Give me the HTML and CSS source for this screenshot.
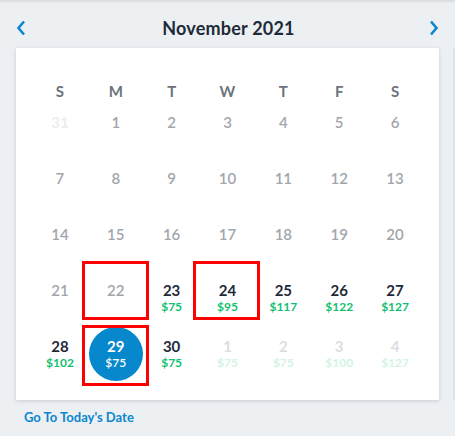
FILE: index.html
```html
<!DOCTYPE html>
<html>
<head>
<meta charset="utf-8">
<link rel="stylesheet" href="styles.css">
</head>
<body>
<div class="page">
  <section class="month">
    <header class="month-head">
      <button class="nav" aria-label="Previous month">
        <svg width="10" height="16" viewBox="0 0 10 16"><path d="M8 1.5 L2.5 8 L8 14.5" fill="none" stroke="#0a87cd" stroke-width="2.6"/></svg>
      </button>
      <h1 class="title">November 2021</h1>
      <button class="nav" aria-label="Next month">
        <svg width="10" height="16" viewBox="0 0 10 16"><path d="M2 1.5 L7.5 8 L2 14.5" fill="none" stroke="#0a87cd" stroke-width="2.6"/></svg>
      </button>
    </header>
    <div class="card">
      <div class="grid">
        <div class="wd">S</div><div class="wd">M</div><div class="wd">T</div><div class="wd">W</div><div class="wd">T</div><div class="wd">F</div><div class="wd">S</div>

        <div class="day faint"><span class="num">31</span><span class="price"></span></div>
        <div class="day past"><span class="num">1</span><span class="price"></span></div>
        <div class="day past"><span class="num">2</span><span class="price"></span></div>
        <div class="day past"><span class="num">3</span><span class="price"></span></div>
        <div class="day past"><span class="num">4</span><span class="price"></span></div>
        <div class="day past"><span class="num">5</span><span class="price"></span></div>
        <div class="day past"><span class="num">6</span><span class="price"></span></div>

        <div class="day past"><span class="num">7</span><span class="price"></span></div>
        <div class="day past"><span class="num">8</span><span class="price"></span></div>
        <div class="day past"><span class="num">9</span><span class="price"></span></div>
        <div class="day past"><span class="num">10</span><span class="price"></span></div>
        <div class="day past"><span class="num">11</span><span class="price"></span></div>
        <div class="day past"><span class="num">12</span><span class="price"></span></div>
        <div class="day past"><span class="num">13</span><span class="price"></span></div>

        <div class="day past"><span class="num">14</span><span class="price"></span></div>
        <div class="day past"><span class="num">15</span><span class="price"></span></div>
        <div class="day past"><span class="num">16</span><span class="price"></span></div>
        <div class="day past"><span class="num">17</span><span class="price"></span></div>
        <div class="day past"><span class="num">18</span><span class="price"></span></div>
        <div class="day past"><span class="num">19</span><span class="price"></span></div>
        <div class="day past"><span class="num">20</span><span class="price"></span></div>

        <div class="day past"><span class="num">21</span><span class="price"></span></div>
        <div class="day past marked"><span class="num">22</span><span class="price"></span></div>
        <div class="day open"><span class="num">23</span><span class="price">$75</span></div>
        <div class="day open marked"><span class="num">24</span><span class="price">$95</span></div>
        <div class="day open"><span class="num">25</span><span class="price">$117</span></div>
        <div class="day open"><span class="num">26</span><span class="price">$122</span></div>
        <div class="day open"><span class="num">27</span><span class="price">$127</span></div>

        <div class="day open"><span class="num">28</span><span class="price">$102</span></div>
        <div class="day selected marked tall"><span class="num">29</span><span class="price">$75</span></div>
        <div class="day open"><span class="num">30</span><span class="price">$75</span></div>
        <div class="day next"><span class="num">1</span><span class="price">$75</span></div>
        <div class="day next"><span class="num">2</span><span class="price">$75</span></div>
        <div class="day next"><span class="num">3</span><span class="price">$100</span></div>
        <div class="day next"><span class="num">4</span><span class="price">$127</span></div>
      </div>
    </div>
    <a class="today" href="#">Go To Today's Date</a>
  </section>
  <div class="peek"></div>
</div>
</body>
</html>
```

FILE: styles.css
```css
*, *::before, *::after { box-sizing: border-box; }
html, body { margin: 0; padding: 0; }
body {
  width: 455px;
  height: 436px;
  overflow: hidden;
  background: #edf0f3;
  font-family: "Lato", "Open Sans", sans-serif;
  color: #1e2a37;
}
.page {
  display: flex;
  height: 436px;
  box-shadow: inset 0 3px 3px -2px rgba(0,0,0,0.12);
}
.month {
  flex: 0 0 453px;
  display: flex;
  flex-direction: column;
}
.month-head {
  height: 48px;
  display: flex;
  align-items: center;
  justify-content: space-between;
  padding: 8px 14px 0 16px;
}
.nav {
  border: 0;
  background: none;
  padding: 0;
  width: 10px;
  height: 16px;
  display: flex;
  cursor: pointer;
}
.title {
  margin: 0 0 0 2px;
  font-size: 18px;
  font-weight: 700;
  color: #1e2a37;
  letter-spacing: 0.2px;
}
.card {
  margin: 0 14px 0 16px;
  background: #fff;
  box-shadow: 0 1px 4px rgba(30,40,60,0.18);
  padding: 32px 16px 18px 16px;
  height: 352px;
}
.peek {
  flex: 0 0 2px;
  margin: 48px 0 36px 0;
  background: #dfe2e6;
}
.grid {
  display: grid;
  grid-template-columns: repeat(7, 1fr);
  grid-template-rows: 22px repeat(5, 56px);
}
.wd {
  display: flex;
  align-items: center;
  justify-content: center;
  font-size: 15px;
  font-weight: 700;
  color: #6c737c;
}
.day {
  position: relative;
  display: flex;
  flex-direction: column;
  align-items: center;
  justify-content: center;
  padding-bottom: 1px;
}
.num {
  height: 18px;
  line-height: 18px;
  font-size: 15px;
  font-weight: 700;
}
.price {
  height: 15px;
  line-height: 15px;
  font-size: 12px;
  font-weight: 700;
  color: #13c06f;
}
.faint .num { color: #eceef0; }
.past .num { color: #a2a6ab; font-weight: 600; }
.open .num { color: #1e2a37; }
.next .num { color: #dcdee1; }
.next .price { color: #d3f4e3; }
.selected::before {
  content: "";
  position: absolute;
  left: 50%;
  top: 50%;
  width: 54px;
  height: 54px;
  margin: -27px 0 0 -27px;
  border-radius: 50%;
  background: #0787cc;
}
.selected .num, .selected .price {
  position: relative;
  color: #fff;
}
.selected .price { font-weight: 600; }
.marked::after {
  content: "";
  position: absolute;
  left: 50%;
  top: 50%;
  width: 67px;
  height: 59px;
  margin: -37px 0 0 -34px;
  border: 3px solid #ff0000;
}
.marked.tall::after {
  height: 61px;
  margin-top: -29px;
}
.today {
  margin: 9px 0 0 24px;
  font-size: 13px;
  font-weight: 700;
  color: #0a87cd;
  text-decoration: none;
}
```
